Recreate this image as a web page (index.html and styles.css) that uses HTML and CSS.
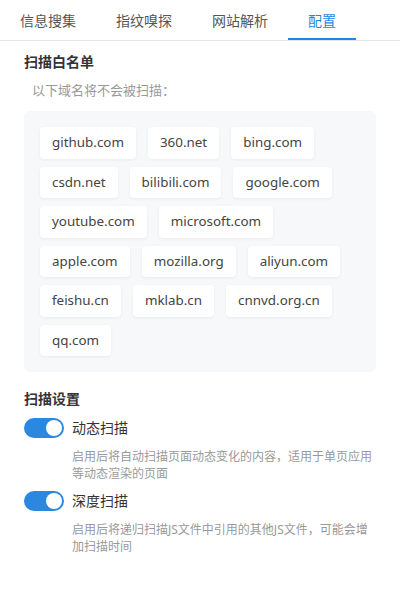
FILE: index.html
```html
<!DOCTYPE html>
<html lang="zh-CN">
<head>
    <meta charset="UTF-8">
    <meta name="viewport" content="width=device-width, initial-scale=1.0">
    <title>配置</title>
    <link rel="stylesheet" href="styles.css">
</head>
<body>
    <nav class="tabs">
        <div class="tab">信息搜集</div>
        <div class="tab">指纹嗅探</div>
        <div class="tab">网站解析</div>
        <div class="tab active">配置</div>
    </nav>

    <main class="panel">
        <h3 class="section-title">扫描白名单</h3>
        <p class="hint">以下域名将不会被扫描：</p>
        <div class="whitelist">
            <span class="domain">github.com</span>
            <span class="domain">360.net</span>
            <span class="domain">bing.com</span>
            <span class="domain">csdn.net</span>
            <span class="domain">bilibili.com</span>
            <span class="domain">google.com</span>
            <span class="domain">youtube.com</span>
            <span class="domain">microsoft.com</span>
            <span class="domain">apple.com</span>
            <span class="domain">mozilla.org</span>
            <span class="domain">aliyun.com</span>
            <span class="domain">feishu.cn</span>
            <span class="domain">mklab.cn</span>
            <span class="domain">cnnvd.org.cn</span>
            <span class="domain">qq.com</span>
        </div>

        <h3 class="section-title settings-title">扫描设置</h3>
        <div class="setting">
            <label class="switch"><input type="checkbox" checked><span class="slider"></span></label>
            <span class="setting-name">动态扫描</span>
            <p class="setting-desc">启用后将自动扫描页面动态变化的内容，适用于单页应用等动态渲染的页面</p>
        </div>
        <div class="setting">
            <label class="switch"><input type="checkbox" checked><span class="slider"></span></label>
            <span class="setting-name">深度扫描</span>
            <p class="setting-desc">启用后将递归扫描JS文件中引用的其他JS文件，可能会增加扫描时间</p>
        </div>
    </main>
</body>
</html>
```

FILE: styles.css
```css
body {
    margin: 0;
    font-family: "Noto Sans", "Noto Sans CJK SC", sans-serif;
    color: #333;
    background-color: #ffffff;
}
.tabs {
    display: flex;
    height: 40px;
    border-bottom: 1px solid #e4e7ed;
}
.tab {
    padding: 1px 20px 0;
    font-size: 14px;
    line-height: 39px;
    color: #555;
}
.tab.active {
    color: #1e88e5;
    box-shadow: inset 0 -2px 0 #1e88e5;
}
.panel {
    padding: 11px 24px 24px;
}
.section-title {
    margin: 0;
    font-size: 14px;
    line-height: 20px;
    font-weight: bold;
    color: #333;
}
.hint {
    margin: 8px 0 11px 8px;
    font-size: 13px;
    line-height: 20px;
    color: #999;
}
.whitelist {
    display: flex;
    flex-wrap: wrap;
    gap: 8px 12px;
    padding: 16px;
    background-color: #f7f8fa;
    border-radius: 6px;
}
.domain {
    padding: 5px 12px;
    font-size: 13.4px;
    line-height: 21.5px;
    color: #444;
    background-color: #ffffff;
    border-radius: 4px;
    box-shadow: 0 1px 3px rgba(0, 0, 0, 0.06);
}
.settings-title {
    margin-top: 17px;
    margin-bottom: 9px;
}
.setting {
    display: grid;
    grid-template-columns: 40px 1fr;
    column-gap: 8px;
    align-items: center;
    margin-bottom: 9px;
}
.switch {
    position: relative;
    width: 40px;
    height: 20px;
}
.switch input {
    display: none;
}
.slider {
    position: absolute;
    inset: 0;
    background-color: #2b88e0;
    border-radius: 10px;
}
.slider::after {
    content: "";
    position: absolute;
    top: 2px;
    right: 2px;
    width: 16px;
    height: 16px;
    border-radius: 50%;
    background-color: #ffffff;
}
.setting-name {
    font-size: 14px;
    line-height: 20px;
    color: #333;
}
.setting-desc {
    grid-column: 2;
    margin: 10px 0 0;
    font-size: 12px;
    line-height: 17px;
    color: #999;
}
```
